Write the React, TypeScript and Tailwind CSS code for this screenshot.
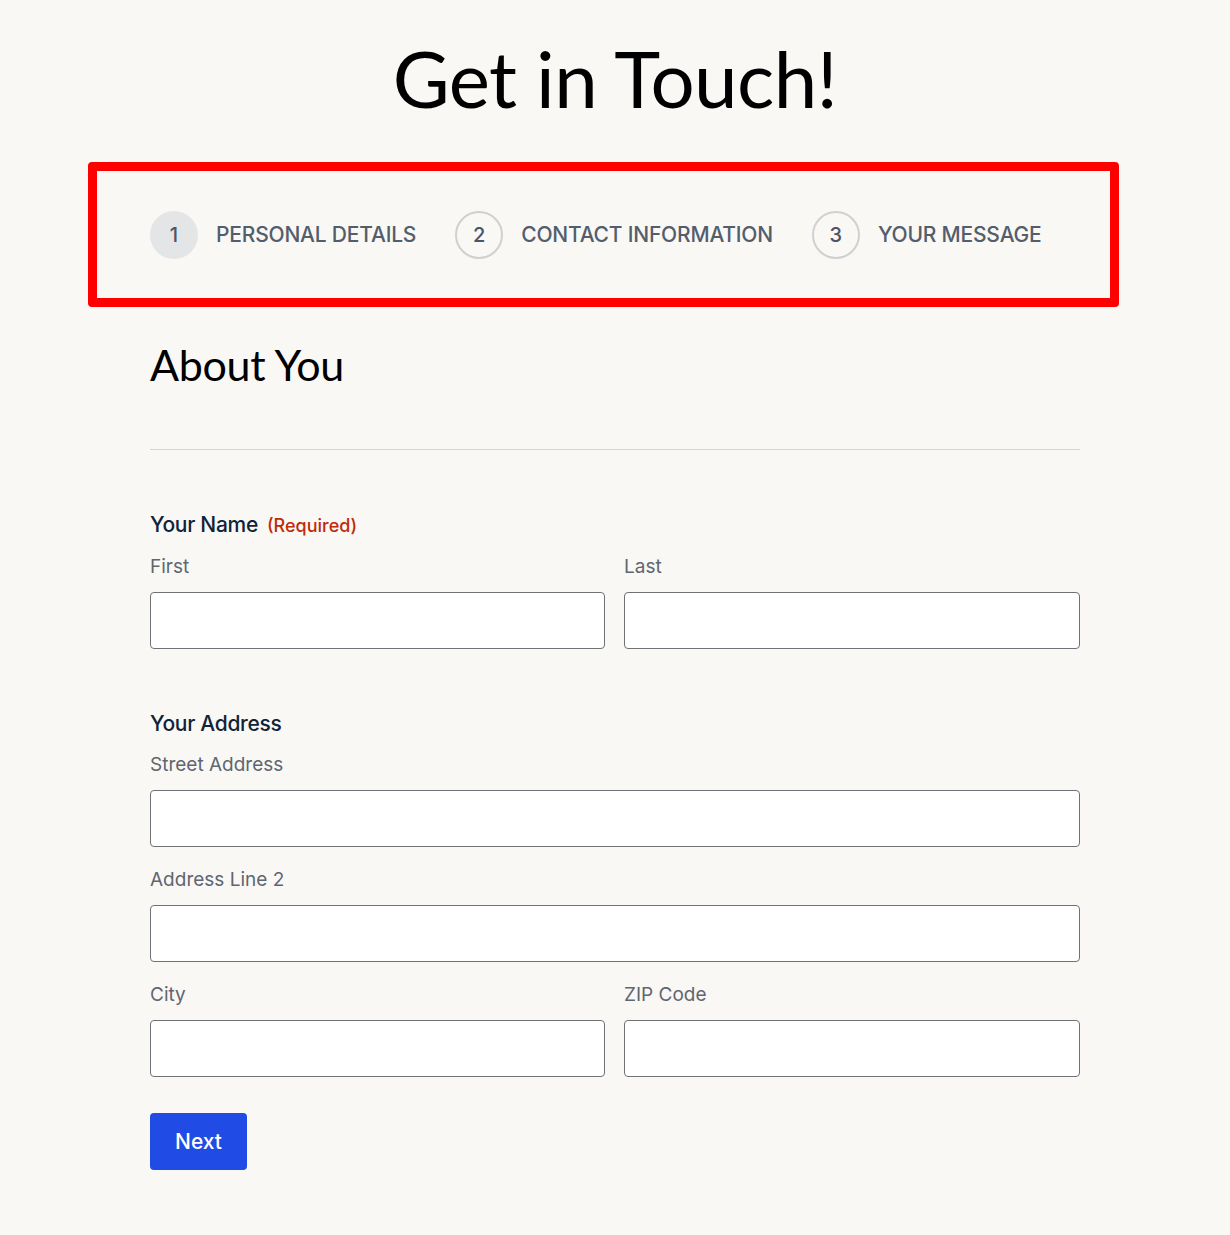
import React from "react";

const Field = ({ label, className = "" }: { label: string; className?: string }) => (
  <div className={"flex flex-col " + className}>
    <label className="text-[19px] leading-[22px] text-[#5f6670]">{label}</label>
    <input className="mt-[14px] h-[57px] w-full rounded-[4px] border border-[#6f7175] bg-white px-3 outline-none" />
  </div>
);

const Step = ({ n, label, active }: { n: number; label: string; active?: boolean }) => (
  <div className="flex items-center">
    <div
      className={
        "flex h-[48px] w-[48px] items-center justify-center rounded-full text-[20px] font-medium text-[#4b5563] " +
        (active ? "bg-[#e4e5e6]" : "border-2 border-[#cfd0d1]")
      }
    >
      {n}
    </div>
    <span className="ml-[18px] text-[21px] font-medium uppercase tracking-[-0.2px] text-[#535d6c]">{label}</span>
  </div>
);

export default function App() {
  return (
    <div className="min-h-[1235px] bg-[#f9f8f5] font-['Inter',sans-serif]">
      <h1 className="pt-[23px] text-center font-['Lato',sans-serif] text-[78px] font-normal leading-[110px] tracking-[-0.5px] text-black">
        Get in Touch!
      </h1>
      <div className="ml-[88px] mt-[29px] flex h-[145px] w-[1031px] items-center gap-[39px] rounded-[4px] border-[9px] border-[#ff0000] pl-[53px]">
        <Step n={1} label="Personal Details" active />
        <Step n={2} label="Contact Information" />
        <Step n={3} label="Your Message" />
      </div>
      <div className="mx-auto w-[930px]">
        <h2 className="mt-[30px] font-['Lato',sans-serif] text-[43px] font-normal leading-[56px] tracking-[-0.3px] text-black">About You</h2>
        <div className="mt-[56px] h-px bg-[#d4d4d4]" />
        <div className="mt-[61px]">
          <div className="flex items-baseline">
            <span className="text-[21px] leading-[28px] font-medium text-[#112337] tracking-[-0.3px]">Your Name</span>
            <span className="ml-[9px] text-[18px] font-medium text-[#c02b0a]">(Required)</span>
          </div>
          <div className="mt-[17px] grid grid-cols-[455px_456px] gap-[19px]">
            <Field label="First" />
            <Field label="Last" />
          </div>
        </div>
        <div className="mt-[61px]">
          <div className="text-[21px] leading-[28px] font-medium text-[#112337] tracking-[-0.3px]">Your Address</div>
          <Field label="Street Address" className="mt-[16px]" />
          <Field label="Address Line 2" className="mt-[22px]" />
          <div className="mt-[22px] grid grid-cols-[455px_456px] gap-[19px]">
            <Field label="City" />
            <Field label="ZIP Code" />
          </div>
        </div>
        <button className="mt-[36px] h-[57px] w-[97px] rounded-[4px] bg-[#204ce5] text-[21px] font-medium text-white">
          Next
        </button>
      </div>
    </div>
  );
}
